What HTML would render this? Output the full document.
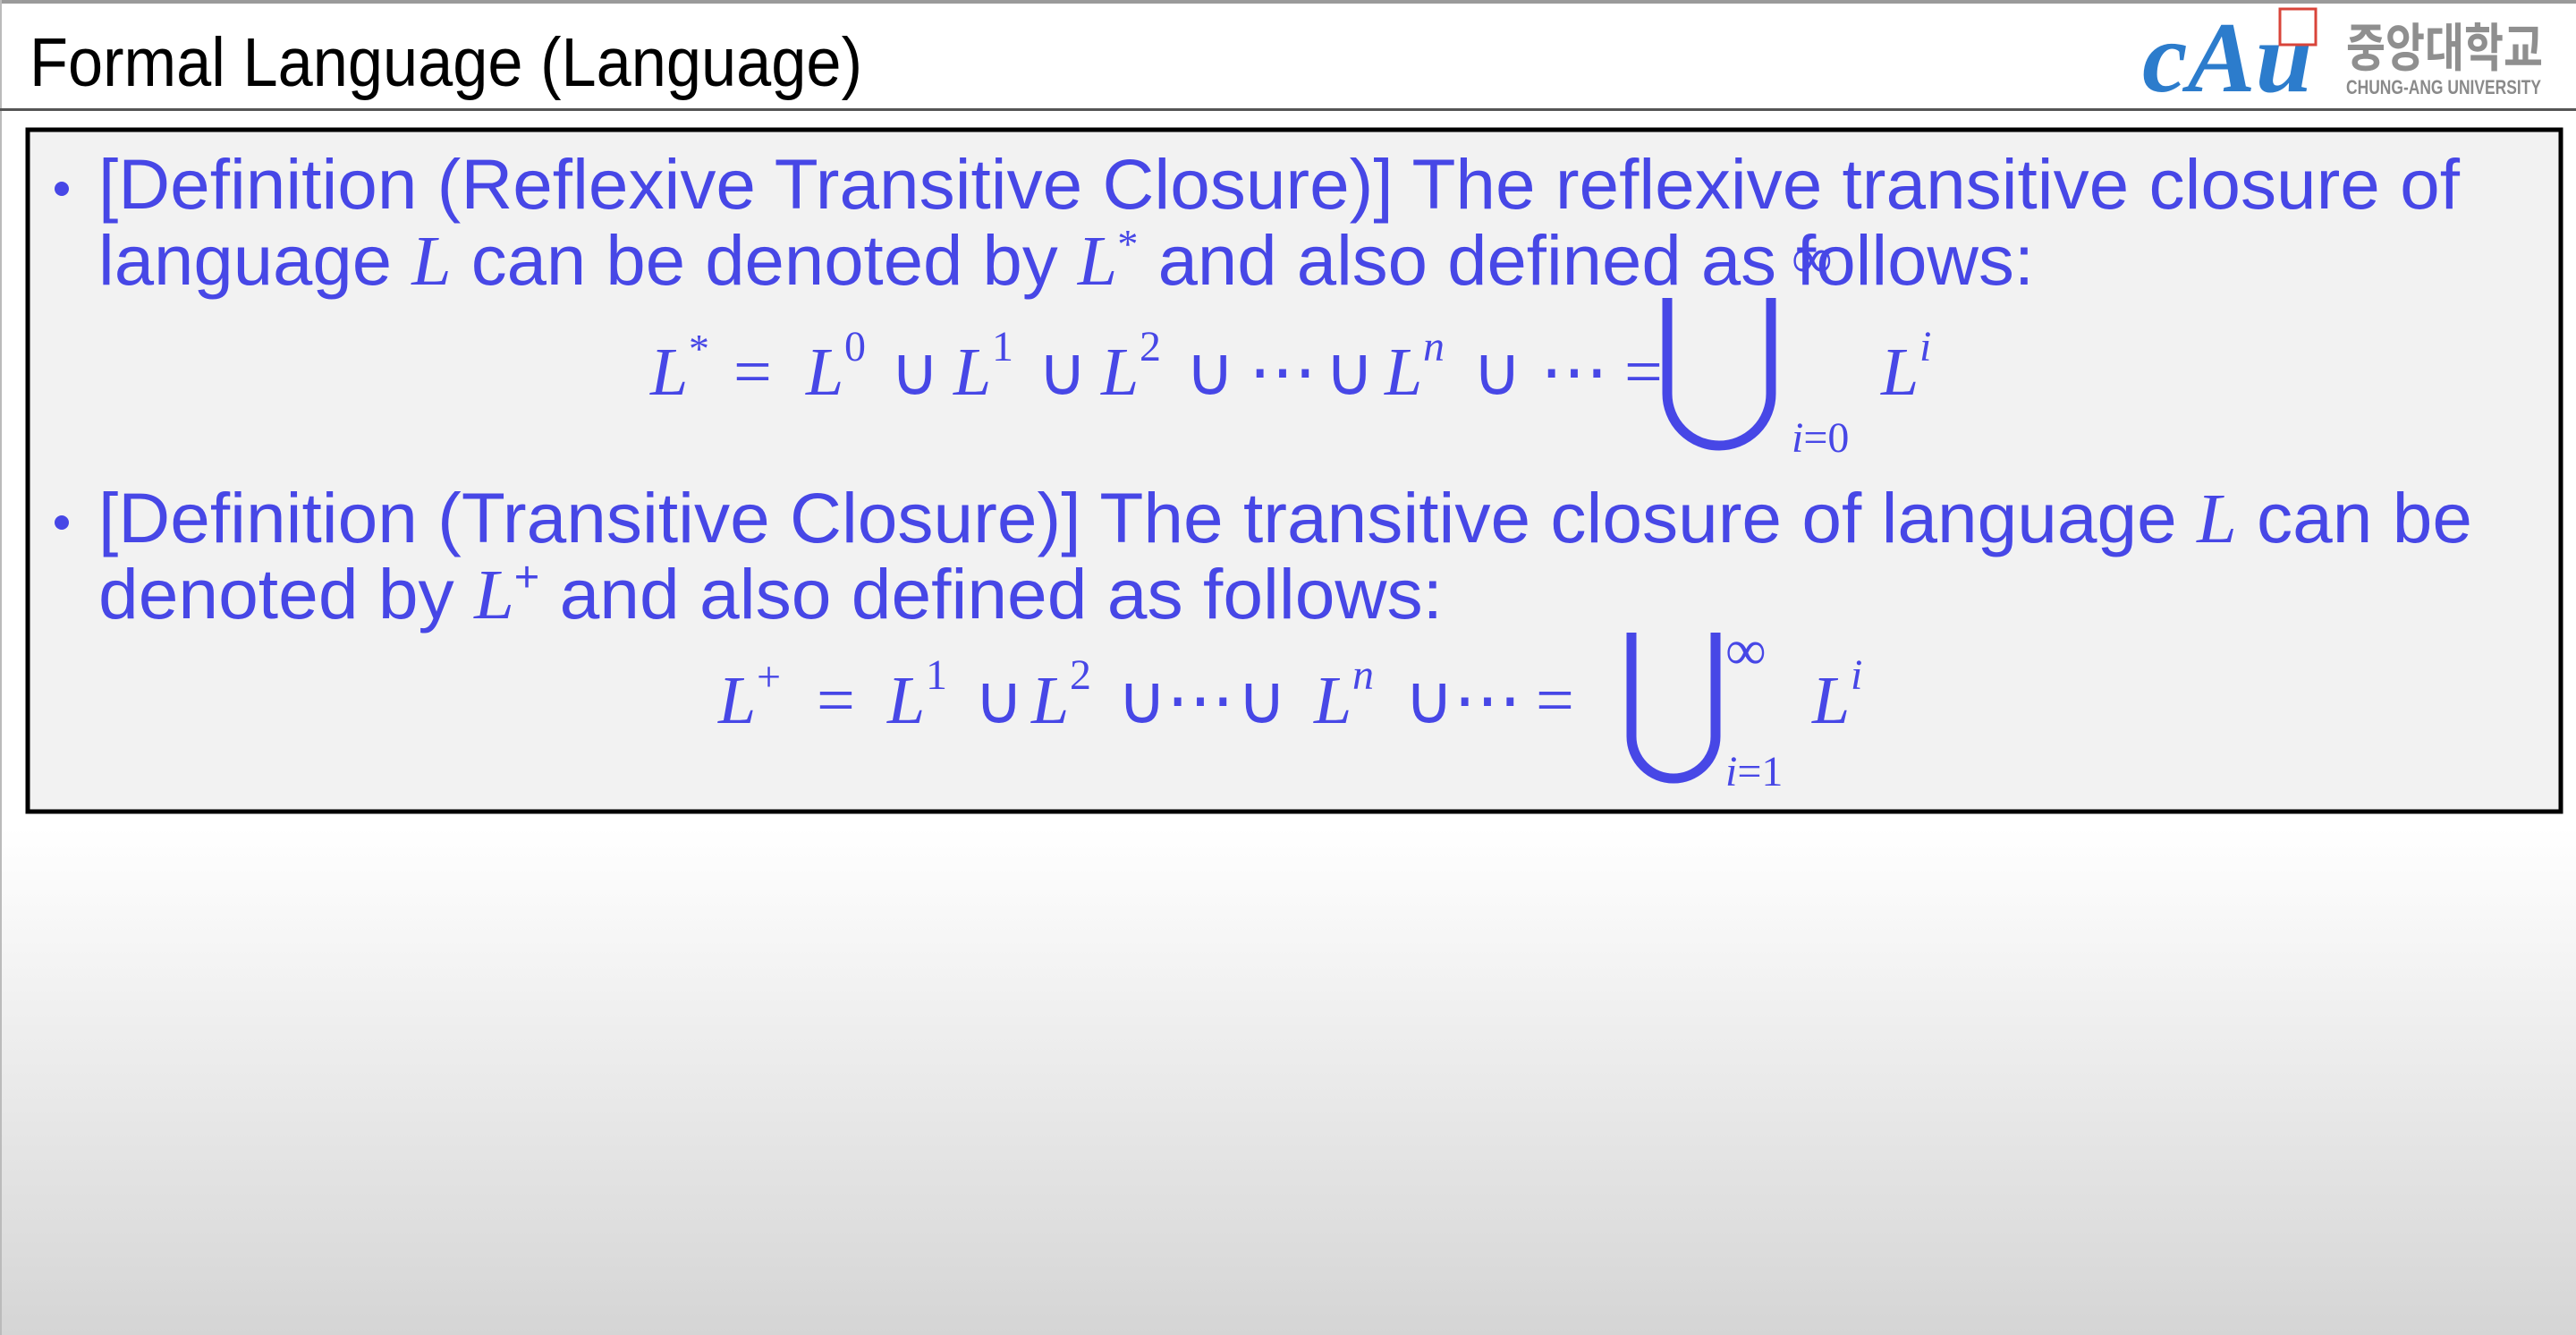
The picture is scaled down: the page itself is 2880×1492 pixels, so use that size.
<!DOCTYPE html>
<html><head><meta charset="utf-8"><style>
html,body{margin:0;padding:0;width:2880px;height:1492px;overflow:hidden}
svg{display:block}
</style></head><body>
<svg width="2880" height="1492" viewBox="0 0 2880 1492" xmlns="http://www.w3.org/2000/svg">
<defs>
<linearGradient id="bg" x1="0" y1="0" x2="0" y2="1">
<stop offset="0" stop-color="#ffffff"/>
<stop offset="0.62" stop-color="#ffffff"/>
<stop offset="1" stop-color="#d5d5d5"/>
</linearGradient>
</defs>
<rect width="2880" height="1492" fill="url(#bg)"/>
<rect x="0" y="0" width="2880" height="4" fill="#9a9a9a"/>
<rect x="0" y="0" width="2" height="1492" fill="#bbbbbb"/>
<text x="33" y="96" font-family="Liberation Sans, sans-serif" font-size="77" fill="#000" textLength="931" lengthAdjust="spacingAndGlyphs">Formal Language (Language)</text>
<rect x="0" y="121" width="2880" height="3" fill="#555"/>

<!-- logo -->
<text x="2395" y="102" font-family="Liberation Serif, serif" font-style="italic" font-weight="bold" font-size="112" fill="#2c7ccc" textLength="190" lengthAdjust="spacingAndGlyphs">cAu</text>
<rect x="2549" y="10" width="40" height="40" fill="none" stroke="#d9443a" stroke-width="3"/>
<text x="2623" y="74" font-family="Noto Sans CJK KR, NanumGothic, sans-serif" font-weight="bold" font-size="58" fill="#8f8f8f" textLength="220" lengthAdjust="spacingAndGlyphs">중앙대학교</text>
<text x="2623" y="105" font-family="Liberation Sans Narrow, Liberation Sans, sans-serif" font-weight="bold" font-size="22" fill="#8a8a8a" textLength="218" lengthAdjust="spacingAndGlyphs">CHUNG-ANG UNIVERSITY</text>

<!-- box -->
<rect x="31" y="145" width="2832" height="762" fill="#f2f2f2" stroke="#000" stroke-width="5"/>

<g font-family="Liberation Sans, sans-serif" font-size="79" fill="#4747e6">
<circle cx="69" cy="211" r="8"/>
<text x="110" y="233" textLength="2640" lengthAdjust="spacingAndGlyphs">[Definition (Reflexive Transitive Closure)] The reflexive transitive closure of</text>
<text x="110" y="318" textLength="2164" lengthAdjust="spacingAndGlyphs">language <tspan font-family="Liberation Serif, serif" font-style="italic">L</tspan> can be denoted by <tspan font-family="Liberation Serif, serif" font-style="italic">L</tspan><tspan font-family="Liberation Serif, serif" font-size="46" dy="-30">*</tspan><tspan dy="30"> and also defined as follows:</tspan></text>
<circle cx="69" cy="584" r="8"/>
<text x="110" y="606" textLength="2654" lengthAdjust="spacingAndGlyphs">[Definition (Transitive Closure)] The transitive closure of language <tspan font-family="Liberation Serif, serif" font-style="italic">L</tspan> can be</text>
<text x="110" y="691" textLength="1503" lengthAdjust="spacingAndGlyphs">denoted by <tspan font-family="Liberation Serif, serif" font-style="italic">L</tspan><tspan font-size="48" dy="-30">+</tspan><tspan dy="30"> and also defined as follows:</tspan></text>
</g>

<!-- equation 1 -->
<g font-family="Liberation Serif, serif" font-size="76" fill="#4747e6">
<text x="727" y="441" font-style="italic">L</text><text x="770" y="405" font-size="46">*</text>
<text x="820" y="441">=</text>
<text x="901" y="441" font-style="italic">L</text><text x="944" y="403" font-size="48">0</text>
<text x="995" y="441">∪</text>
<text x="1066" y="441" font-style="italic">L</text><text x="1109" y="403" font-size="48">1</text>
<text x="1160" y="441">∪</text>
<text x="1231" y="441" font-style="italic">L</text><text x="1274" y="403" font-size="48">2</text>
<text x="1325" y="441">∪</text>
<text x="1396" y="441">⋯</text>
<text x="1481" y="441">∪</text>
<text x="1548" y="441" font-style="italic">L</text><text x="1591" y="403" font-size="48" font-style="italic">n</text>
<text x="1646" y="441">∪</text>
<text x="1722" y="441">⋯</text>
<text x="1816" y="441">=</text>
<text x="2003" y="310" font-size="64">∞</text>
<text x="2003" y="505" font-size="48"><tspan font-style="italic">i</tspan>=0</text>
<text x="2103" y="441" font-style="italic">L</text><text x="2146" y="403" font-size="48" font-style="italic">i</text>
</g>
<path d="M1864 333 V440 A58 58 0 0 0 1980 440 V333" fill="none" stroke="#4747e6" stroke-width="11"/>

<!-- equation 2 -->
<g font-family="Liberation Serif, serif" font-size="76" fill="#4747e6">
<text x="803" y="808" font-style="italic">L</text><text x="846" y="772" font-size="48">+</text>
<text x="913" y="808">=</text>
<text x="992" y="808" font-style="italic">L</text><text x="1035" y="770" font-size="48">1</text>
<text x="1089" y="808">∪</text>
<text x="1153" y="808" font-style="italic">L</text><text x="1196" y="770" font-size="48">2</text>
<text x="1249" y="808">∪</text>
<text x="1304" y="808">⋯</text>
<text x="1383" y="808">∪</text>
<text x="1469" y="808" font-style="italic">L</text><text x="1512" y="770" font-size="48" font-style="italic">n</text>
<text x="1570" y="808">∪</text>
<text x="1625" y="808">⋯</text>
<text x="1717" y="808">=</text>
<text x="1929" y="748" font-size="64">∞</text>
<text x="1929" y="878" font-size="48"><tspan font-style="italic">i</tspan>=1</text>
<text x="2026" y="808" font-style="italic">L</text><text x="2069" y="770" font-size="48" font-style="italic">i</text>
</g>
<path d="M1824 707 V823 A47 47 0 0 0 1918 823 V707" fill="none" stroke="#4747e6" stroke-width="11"/>
</svg>
</body></html>
